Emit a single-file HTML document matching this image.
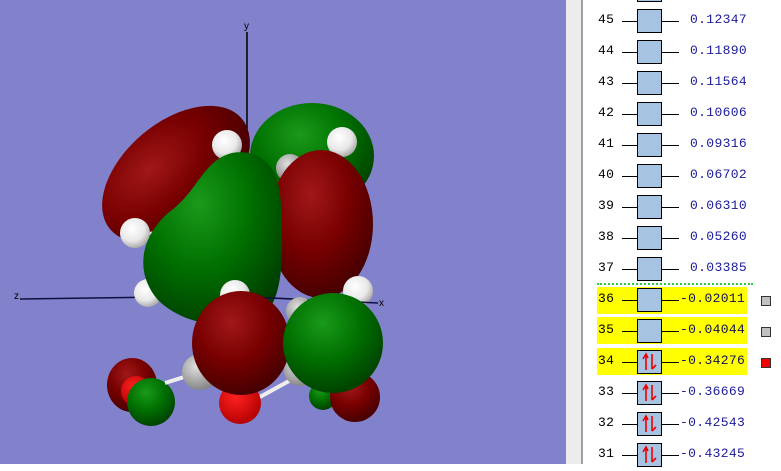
<!DOCTYPE html>
<html><head><meta charset="utf-8"><style>
*{margin:0;padding:0}
body{width:781px;height:464px;overflow:hidden;position:relative;background:#fff;font-family:"Liberation Mono",monospace}
#view{position:absolute;left:0;top:0;width:566px;height:464px;background:#8181cc}
#strip{position:absolute;left:566px;top:0;width:15px;height:464px;background:#ececec;border-right:2px solid #a0a0a0}
.r{position:absolute;left:0;width:781px;height:31px}
.hl{position:absolute;left:597px;width:150px;height:27px;background:#ffff00}
.n{position:absolute;left:598px;font-size:13px;color:#000;letter-spacing:0.3px}
.ln{position:absolute;height:1px;background:#000}
.bx{position:absolute;left:637px;width:23px;height:22px;border:1px solid #000;background:#a6c4e2}
.v{position:absolute;font-size:13px;color:#1a1a9a;letter-spacing:0.35px}
.sq{position:absolute;left:761px;width:8px;height:8px;border:1px solid #333}
</style></head><body>
<div id="view">
<svg width="566" height="464" viewBox="0 0 566 464">
<defs>
<radialGradient id="rd" cx="0.4" cy="0.3" r="0.75"><stop offset="0" stop-color="#a11818"/><stop offset="0.5" stop-color="#780000"/><stop offset="1" stop-color="#400000"/></radialGradient>
<radialGradient id="gr" cx="0.4" cy="0.3" r="0.75"><stop offset="0" stop-color="#1a9a1a"/><stop offset="0.5" stop-color="#007000"/><stop offset="1" stop-color="#003c00"/></radialGradient>
<radialGradient id="wh" cx="0.4" cy="0.35" r="0.7"><stop offset="0" stop-color="#ffffff"/><stop offset="0.6" stop-color="#e8e8e8"/><stop offset="1" stop-color="#a0a0a0"/></radialGradient>
<radialGradient id="gy" cx="0.4" cy="0.35" r="0.7"><stop offset="0" stop-color="#e0e0e0"/><stop offset="1" stop-color="#808080"/></radialGradient>
<radialGradient id="rb" cx="0.4" cy="0.35" r="0.7"><stop offset="0" stop-color="#ff2020"/><stop offset="1" stop-color="#b00000"/></radialGradient>
</defs>
<line x1="247" y1="32" x2="247" y2="130" stroke="#000" stroke-width="1.5"/>
<text x="244" y="29" font-size="10" font-family="Liberation Sans" fill="#000">y</text>
<line x1="20" y1="299" x2="240" y2="296" stroke="#101040" stroke-width="1.5"/>
<text x="14" y="299" font-size="10" font-family="Liberation Sans" fill="#000">z</text>
<text x="379" y="306" font-size="10" font-family="Liberation Sans" fill="#000">x</text>
<ellipse cx="312" cy="156" rx="62" ry="53" fill="url(#gr)"/>
<ellipse cx="176" cy="174" rx="86" ry="52" transform="rotate(-40 176 174)" fill="url(#rd)"/>
<circle cx="227" cy="145" r="15" fill="url(#wh)"/>
<circle cx="342" cy="142" r="15" fill="url(#wh)"/>
<circle cx="290" cy="168" r="14" fill="url(#gy)"/>
<line x1="140" y1="235" x2="200" y2="225" stroke="#ddd" stroke-width="3"/>
<circle cx="135" cy="233" r="15" fill="url(#wh)"/>
<circle cx="148" cy="293" r="14" fill="url(#wh)"/>
<ellipse cx="321" cy="224" rx="52" ry="74" fill="url(#rd)"/>
<path d="M232 153 C264 148 280 170 281 205 C283 250 284 292 267 312 C247 332 188 330 158 300 C136 275 138 240 168 213 C198 192 203 160 232 153 Z" fill="url(#gr)"/>
<circle cx="235" cy="295" r="15" fill="url(#wh)"/>
<circle cx="358" cy="291" r="15" fill="url(#wh)"/>
<line x1="250" y1="297" x2="378" y2="303" stroke="#101040" stroke-width="1.5"/>
<circle cx="300" cy="311" r="14" fill="url(#gy)"/>
<ellipse cx="132" cy="385" rx="25" ry="27" fill="url(#rd)"/>
<circle cx="136" cy="391" r="15" fill="url(#rb)"/>
<circle cx="151" cy="402" r="24" fill="url(#gr)"/>
<line x1="165" y1="383" x2="200" y2="372" stroke="#eee" stroke-width="4"/>
<line x1="258" y1="398" x2="300" y2="375" stroke="#eee" stroke-width="4"/>
<circle cx="200" cy="372" r="18" fill="url(#gy)"/>
<circle cx="240" cy="403" r="21" fill="url(#rb)"/>
<circle cx="300" cy="370" r="16" fill="url(#gy)"/>
<circle cx="323" cy="396" r="14" fill="url(#gr)"/>
<circle cx="355" cy="397" r="25" fill="url(#rd)"/>
<ellipse cx="241" cy="343" rx="49" ry="52" fill="url(#rd)"/>
<ellipse cx="333" cy="343" rx="50" ry="50" fill="url(#gr)"/>
</svg>
</div>
<div id="strip"></div>
<div class="bx" style="top:-22px"></div>
<div class="ln" style="left:597px;top:283px;width:156px;height:0;border-top:2px dotted #2ecc40;background:none"></div>

<div class="r" style="top:5px"><div class="n" style="top:7px">45</div><div class="ln" style="left:622px;top:16px;width:15px"></div><div class="bx" style="top:4px"></div><div class="ln" style="left:662px;top:16px;width:17px"></div><div class="v" style="left:690px;top:7px">0.12347</div></div>
<div class="r" style="top:36px"><div class="n" style="top:7px">44</div><div class="ln" style="left:622px;top:16px;width:15px"></div><div class="bx" style="top:4px"></div><div class="ln" style="left:662px;top:16px;width:17px"></div><div class="v" style="left:690px;top:7px">0.11890</div></div>
<div class="r" style="top:67px"><div class="n" style="top:7px">43</div><div class="ln" style="left:622px;top:16px;width:15px"></div><div class="bx" style="top:4px"></div><div class="ln" style="left:662px;top:16px;width:17px"></div><div class="v" style="left:690px;top:7px">0.11564</div></div>
<div class="r" style="top:98px"><div class="n" style="top:7px">42</div><div class="ln" style="left:622px;top:16px;width:15px"></div><div class="bx" style="top:4px"></div><div class="ln" style="left:662px;top:16px;width:17px"></div><div class="v" style="left:690px;top:7px">0.10606</div></div>
<div class="r" style="top:129px"><div class="n" style="top:7px">41</div><div class="ln" style="left:622px;top:16px;width:15px"></div><div class="bx" style="top:4px"></div><div class="ln" style="left:662px;top:16px;width:17px"></div><div class="v" style="left:690px;top:7px">0.09316</div></div>
<div class="r" style="top:160px"><div class="n" style="top:7px">40</div><div class="ln" style="left:622px;top:16px;width:15px"></div><div class="bx" style="top:4px"></div><div class="ln" style="left:662px;top:16px;width:17px"></div><div class="v" style="left:690px;top:7px">0.06702</div></div>
<div class="r" style="top:191px"><div class="n" style="top:7px">39</div><div class="ln" style="left:622px;top:16px;width:15px"></div><div class="bx" style="top:4px"></div><div class="ln" style="left:662px;top:16px;width:17px"></div><div class="v" style="left:690px;top:7px">0.06310</div></div>
<div class="r" style="top:222px"><div class="n" style="top:7px">38</div><div class="ln" style="left:622px;top:16px;width:15px"></div><div class="bx" style="top:4px"></div><div class="ln" style="left:662px;top:16px;width:17px"></div><div class="v" style="left:690px;top:7px">0.05260</div></div>
<div class="r" style="top:253px"><div class="n" style="top:7px">37</div><div class="ln" style="left:622px;top:16px;width:15px"></div><div class="bx" style="top:4px"></div><div class="ln" style="left:662px;top:16px;width:17px"></div><div class="v" style="left:690px;top:7px">0.03385</div></div>

<div class="r" style="top:284px"><div class="hl" style="top:3px"></div><div class="n" style="top:7px">36</div><div class="ln" style="left:622px;top:16px;width:15px"></div><div class="bx" style="top:4px"></div><div class="ln" style="left:662px;top:16px;width:17px"></div><div class="v" style="left:680px;top:7px;color:#10105a">-0.02011</div><div class="sq" style="top:12px;background:#c0c0c0"></div></div>
<div class="r" style="top:315px"><div class="hl" style="top:2px"></div><div class="n" style="top:7px">35</div><div class="ln" style="left:622px;top:16px;width:15px"></div><div class="bx" style="top:4px"></div><div class="ln" style="left:662px;top:16px;width:17px"></div><div class="v" style="left:680px;top:7px;color:#10105a">-0.04044</div><div class="sq" style="top:12px;background:#c0c0c0"></div></div>
<div class="r" style="top:346px"><div class="hl" style="top:2px"></div><div class="n" style="top:7px">34</div><div class="ln" style="left:622px;top:16px;width:15px"></div><div class="bx" style="top:4px"><svg width="23" height="22"><path d="M8 19V4M5 8L8 3 10 7" stroke="#e00" stroke-width="1.6" fill="none"/><path d="M14 3V18M14 18L18 14" stroke="#e00" stroke-width="1.6" fill="none"/></svg></div><div class="ln" style="left:662px;top:16px;width:17px"></div><div class="v" style="left:680px;top:7px;color:#10105a">-0.34276</div><div class="sq" style="top:12px;background:#f00000"></div></div>

<div class="r" style="top:377px"><div class="n" style="top:7px">33</div><div class="ln" style="left:622px;top:16px;width:15px"></div><div class="bx" style="top:4px"><svg width="23" height="22"><path d="M8 19V4M5 8L8 3 10 7" stroke="#e00" stroke-width="1.6" fill="none"/><path d="M14 3V18M14 18L18 14" stroke="#e00" stroke-width="1.6" fill="none"/></svg></div><div class="ln" style="left:662px;top:16px;width:17px"></div><div class="v" style="left:680px;top:7px">-0.36669</div></div>
<div class="r" style="top:408px"><div class="n" style="top:7px">32</div><div class="ln" style="left:622px;top:16px;width:15px"></div><div class="bx" style="top:4px"><svg width="23" height="22"><path d="M8 19V4M5 8L8 3 10 7" stroke="#e00" stroke-width="1.6" fill="none"/><path d="M14 3V18M14 18L18 14" stroke="#e00" stroke-width="1.6" fill="none"/></svg></div><div class="ln" style="left:662px;top:16px;width:17px"></div><div class="v" style="left:680px;top:7px">-0.42543</div></div>
<div class="r" style="top:439px"><div class="n" style="top:7px">31</div><div class="ln" style="left:622px;top:16px;width:15px"></div><div class="bx" style="top:4px"><svg width="23" height="22"><path d="M8 19V4M5 8L8 3 10 7" stroke="#e00" stroke-width="1.6" fill="none"/><path d="M14 3V18M14 18L18 14" stroke="#e00" stroke-width="1.6" fill="none"/></svg></div><div class="ln" style="left:662px;top:16px;width:17px"></div><div class="v" style="left:680px;top:7px">-0.43245</div></div>
</body></html>
